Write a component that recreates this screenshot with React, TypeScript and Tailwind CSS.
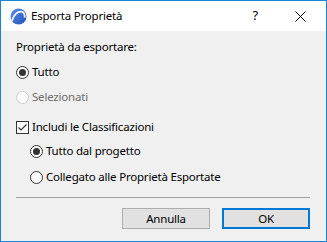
import React from 'react'

const font = { fontFamily: '"Noto Sans", "Open Sans", sans-serif', letterSpacing: '-0.2px' }

const Radio = ({ checked, disabled }: { checked?: boolean; disabled?: boolean }) => (
  <span
    className={`flex h-[13px] w-[13px] items-center justify-center rounded-full border bg-white ${
      disabled ? 'border-[#cccccc]' : 'border-[#333333]'
    }`}
  >
    {checked && <span className="h-[7px] w-[7px] rounded-full bg-[#333333]" />}
  </span>
)

const Checkbox = () => (
  <span className="flex h-[13px] w-[13px] items-center justify-center border border-[#333333] bg-white">
    <svg width="11" height="11" viewBox="0 0 11 11">
      <path d="M1.5 5.5 L4 8 L9.5 2.5" fill="none" stroke="#333333" strokeWidth="1.2" />
    </svg>
  </span>
)

const Logo = () => (
  <svg width="17" height="17" viewBox="0 0 16 16">
    <defs>
      <linearGradient id="lg" x1="0" y1="0" x2="1" y2="1">
        <stop offset="0" stopColor="#5b8ff0" />
        <stop offset="1" stopColor="#2450b8" />
      </linearGradient>
    </defs>
    <circle cx="8" cy="8" r="7.5" fill="url(#lg)" />
    <path d="M1.8 12 C3.5 6 7.5 2.8 10.8 3.4 C13 4 14 6.5 13.8 9" fill="none" stroke="#ffffff" strokeWidth="1.6" />
  </svg>
)

export default function App() {
  return (
    <div
      className="flex h-[242px] w-[327px] flex-col border border-[#1883d7] bg-[#f0f0f0] text-[11.5px] text-black"
      style={font}
    >
      {/* Title bar */}
      <div className="flex h-[30px] items-center bg-white pl-[9px]">
        <Logo />
        <span className="ml-[4px] text-[11.5px]">Esporta Proprietà</span>
        <span className="ml-auto mr-[37px] text-[13px]">?</span>
        <svg width="11" height="11" viewBox="0 0 11 11" className="mr-[20px]">
          <path d="M0.5 0.5 L10.5 10.5 M10.5 0.5 L0.5 10.5" stroke="#000" strokeWidth="1" />
        </svg>
      </div>

      {/* Body */}
      <div className="flex flex-col px-[15px] pt-[8px]">
        <div className="flex h-[16px] items-center">Proprietà da esportare:</div>
        <div className="mt-[9px] flex h-[16px] items-center gap-[3px]">
          <Radio checked />
          <span>Tutto</span>
        </div>
        <div className="mt-[9px] flex h-[16px] items-center gap-[3px]">
          <Radio disabled />
          <span className="text-[#6d6d6d]">Selezionati</span>
        </div>
        <div className="mt-[14px] flex h-[16px] items-center gap-[3px]">
          <Checkbox />
          <span>Includi le Classificazioni</span>
        </div>
        <div className="mt-[8px] flex h-[16px] items-center gap-[3px] pl-[14px]">
          <Radio checked />
          <span>Tutto dal progetto</span>
        </div>
        <div className="mt-[10px] flex h-[16px] items-center gap-[3px] pl-[14px]">
          <Radio />
          <span>Collegato alle Proprietà Esportate</span>
        </div>
        <div className="mt-[12px] h-px w-[294px] bg-[#a0a0a0]" />
        <div className="mt-[10px] flex justify-end gap-[12px] pr-[1px]">
          <button className="flex h-[21px] w-[88px] items-center justify-center border border-[#adadad] bg-[#e1e1e1]">
            Annulla
          </button>
          <button className="flex h-[21px] w-[88px] items-center justify-center border-2 border-[#0078d7] bg-[#e1e1e1]">
            OK
          </button>
        </div>
      </div>
    </div>
  )
}
